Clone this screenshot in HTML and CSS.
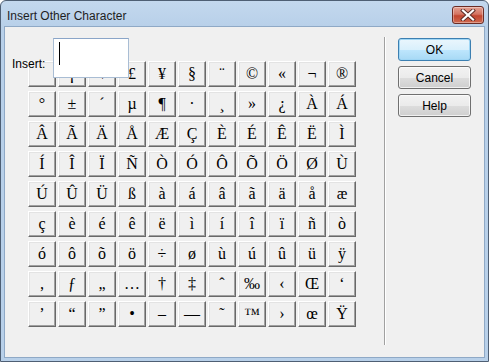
FILE: index.html
```html
<!DOCTYPE html>
<html>
<head>
<meta charset="utf-8">
<link rel="stylesheet" href="styles.css">
</head>
<body>
<div class="window">
  <div class="titlebar">
    <span class="title">Insert Other Character</span>
    <div class="close">
      <svg width="16" height="12" viewBox="0 0 16 12"><path d="M3 1.5 L13 10.5 M13 1.5 L3 10.5" stroke="#5a2a24" stroke-width="4" stroke-linecap="square"/><path d="M3 1.5 L13 10.5 M13 1.5 L3 10.5" stroke="#ffffff" stroke-width="2.2" stroke-linecap="square"/></svg>
    </div>
  </div>
  <div class="client">
    <div class="left">
      <div class="grid">
        <button class="ch">&nbsp;</button><button class="ch">¡</button><button class="ch">¢</button><button class="ch">£</button><button class="ch">¥</button><button class="ch">§</button><button class="ch">¨</button><button class="ch">©</button><button class="ch">«</button><button class="ch">¬</button><button class="ch">®</button>
        <button class="ch">°</button><button class="ch">±</button><button class="ch">´</button><button class="ch">µ</button><button class="ch">¶</button><button class="ch">·</button><button class="ch">¸</button><button class="ch">»</button><button class="ch">¿</button><button class="ch">À</button><button class="ch">Á</button>
        <button class="ch">Â</button><button class="ch">Ã</button><button class="ch">Ä</button><button class="ch">Å</button><button class="ch">Æ</button><button class="ch">Ç</button><button class="ch">È</button><button class="ch">É</button><button class="ch">Ê</button><button class="ch">Ë</button><button class="ch">Ì</button>
        <button class="ch">Í</button><button class="ch">Î</button><button class="ch">Ï</button><button class="ch">Ñ</button><button class="ch">Ò</button><button class="ch">Ó</button><button class="ch">Ô</button><button class="ch">Õ</button><button class="ch">Ö</button><button class="ch">Ø</button><button class="ch">Ù</button>
        <button class="ch">Ú</button><button class="ch">Û</button><button class="ch">Ü</button><button class="ch">ß</button><button class="ch">à</button><button class="ch">á</button><button class="ch">â</button><button class="ch">ã</button><button class="ch">ä</button><button class="ch">å</button><button class="ch">æ</button>
        <button class="ch">ç</button><button class="ch">è</button><button class="ch">é</button><button class="ch">ê</button><button class="ch">ë</button><button class="ch">ì</button><button class="ch">í</button><button class="ch">î</button><button class="ch">ï</button><button class="ch">ñ</button><button class="ch">ò</button>
        <button class="ch">ó</button><button class="ch">ô</button><button class="ch">õ</button><button class="ch">ö</button><button class="ch">÷</button><button class="ch">ø</button><button class="ch">ù</button><button class="ch">ú</button><button class="ch">û</button><button class="ch">ü</button><button class="ch">ÿ</button>
        <button class="ch">‚</button><button class="ch">ƒ</button><button class="ch">„</button><button class="ch">…</button><button class="ch">†</button><button class="ch">‡</button><button class="ch">ˆ</button><button class="ch">‰</button><button class="ch">‹</button><button class="ch">Œ</button><button class="ch">‘</button>
        <button class="ch">’</button><button class="ch">“</button><button class="ch">”</button><button class="ch">•</button><button class="ch">–</button><button class="ch">—</button><button class="ch">˜</button><button class="ch">™</button><button class="ch">›</button><button class="ch">œ</button><button class="ch">Ÿ</button>
      </div>
      <label class="insert-label">Insert:</label>
      <div class="insert-box"><span class="caret"></span></div>
    </div>
    <div class="separator"></div>
    <div class="right">
      <button class="btn default">OK</button>
      <button class="btn">Cancel</button>
      <button class="btn">Help</button>
    </div>
  </div>
</div>
</body>
</html>
```
FILE: styles.css
```css
* { box-sizing: border-box; }
html, body { margin: 0; padding: 0; background: #ffffff; }
body { width: 489px; height: 362px; overflow: hidden; font-family: "Liberation Sans", Arial, sans-serif; }

.window {
  width: 489px;
  height: 362px;
  border: 1px solid #4e5f74;
  border-radius: 6px 6px 0 0;
  background: linear-gradient(to bottom, #c3d8ee 0px, #b8d0e9 26px, #b8d0e9 100%);
  padding: 0 3px 3px 3px;
  display: flex;
  flex-direction: column;
}

.titlebar {
  height: 25px;
  display: flex;
  align-items: flex-start;
  justify-content: space-between;
}
.title {
  font-size: 12px;
  color: #1e1e1e;
  margin: 8px 0 0 3px;
}
.close {
  width: 32px;
  height: 18px;
  margin-top: 5px;
  margin-right: 1px;
  border: 1px solid #6b2c25;
  border-radius: 3px;
  background: linear-gradient(to bottom, #e3a193 0%, #d47462 45%, #c2452f 55%, #cf6a50 100%);
  box-shadow: inset 0 0 0 1px rgba(255,255,255,0.35);
  display: flex;
  align-items: center;
  justify-content: center;
}

.client {
  flex: 1;
  background: #f0f0f0;
  border: 1px solid #8fa9c6;
  display: flex;
  align-items: flex-start;
}

.left {
  position: relative;
  padding: 34px 0 0 23px;
}
.grid {
  display: grid;
  grid-template-columns: repeat(11, 28px);
  grid-auto-rows: 26px;
  column-gap: 2px;
  row-gap: 4px;
}
.ch {
  width: 28px;
  height: 26px;
  margin: 0;
  padding: 0;
  background: #f0f0f0;
  border: 1px solid;
  border-color: #ffffff #696969 #696969 #ffffff;
  box-shadow: inset -1px -1px 0 #a0a0a0, inset 1px 1px 0 #e3e3e3;
  font-family: "Liberation Serif", "Times New Roman", serif;
  font-size: 16px;
  color: #000;
  display: flex;
  align-items: center;
  justify-content: center;
  line-height: 1;
}

.insert-label {
  position: absolute;
  left: 7px;
  top: 30px;
  font-size: 12px;
  color: #000;
}
.insert-box {
  position: absolute;
  left: 48px;
  top: 11px;
  width: 76px;
  height: 40px;
  background: #ffffff;
  border: 1px solid #a9bdd4;
  border-top-color: #8aa5c8;
}
.caret {
  position: absolute;
  left: 5px;
  top: 3px;
  width: 1px;
  height: 23px;
  background: #000;
}

.separator {
  width: 2px;
  height: 308px;
  margin: 10px 0 0 28px;
  border-left: 1px solid #a0a0a0;
  border-right: 1px solid #ffffff;
}

.right {
  display: flex;
  flex-direction: column;
  gap: 5px;
  margin: 11px 0 0 12px;
}
.btn {
  width: 73px;
  height: 23px;
  margin: 0;
  padding: 0;
  border: 1px solid #707070;
  border-radius: 3px;
  background: linear-gradient(to bottom, #f2f2f2 0%, #ebebeb 50%, #dddddd 51%, #cfcfcf 100%);
  box-shadow: inset 0 0 0 1px rgba(255,255,255,0.7);
  font-family: "Liberation Sans", Arial, sans-serif;
  font-size: 12px;
  color: #000;
}
.btn.default {
  border-color: #3c7fb1;
  background: linear-gradient(to bottom, #eaf6fd 0%, #d9f0fc 50%, #bee6fd 51%, #a7d9f5 100%);
  box-shadow: inset 0 0 0 1px #9fd6f5;
}
```
